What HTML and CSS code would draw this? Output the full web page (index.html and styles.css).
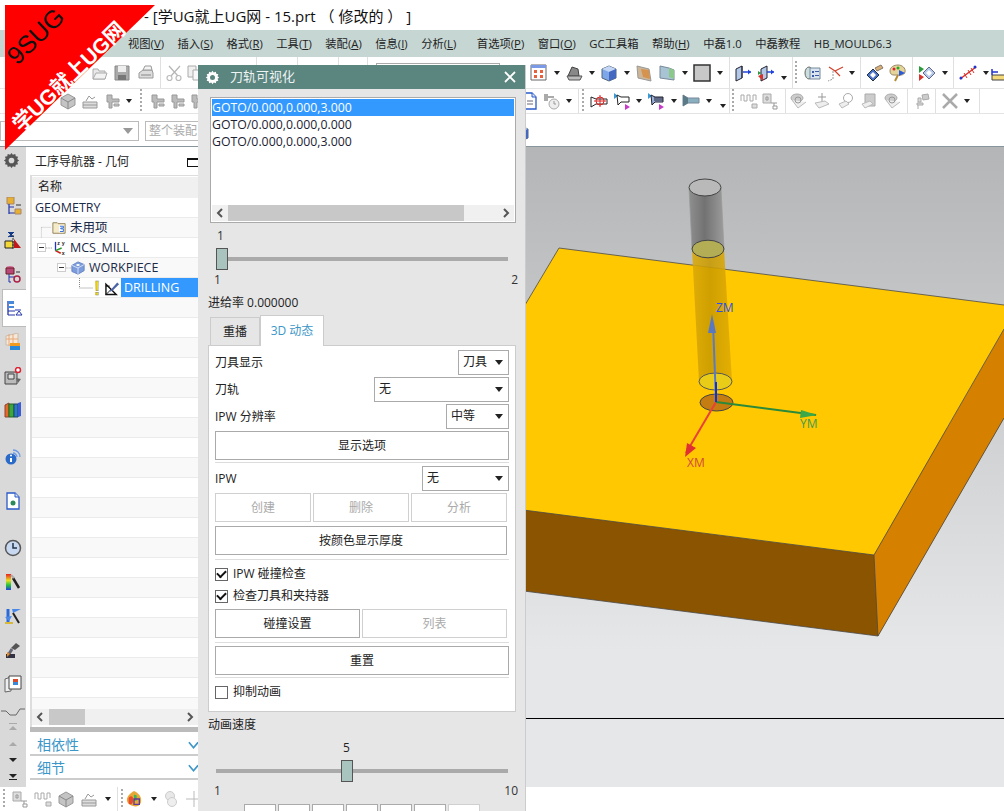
FILE: index.html
```html
<!DOCTYPE html>
<html lang="zh">
<head>
<meta charset="utf-8">
<title>刀轨可视化</title>
<link rel="stylesheet" href="styles.css">
</head>
<body>
<svg class="defs" width="0" height="0">
<defs>
<symbol id="folder" viewBox="0 0 18 18"><path d="M2 15V5h5l1 2h6v8z" fill="#e8e8e8" stroke="#aaa"/><path d="M2 15l3-6h11l-2 6z" fill="#f2f2f2" stroke="#aaa"/></symbol>
<symbol id="save" viewBox="0 0 18 18"><path d="M2 2h14v14H2z" fill="#aaa" stroke="#888"/><path d="M5 2h8v6H5z" fill="#eee"/><path d="M5 11h8v5H5z" fill="#777"/></symbol>
<symbol id="print" viewBox="0 0 18 18"><path d="M2 9l4-3h9l1 3v5H2z" fill="#ddd" stroke="#999"/><path d="M6 6l2-4h6l1 4z" fill="#f4f4f4" stroke="#999"/><path d="M4 11h10" stroke="#888"/></symbol>
<symbol id="scis" viewBox="0 0 18 18"><path d="M15 2L6 12M4 2l9 10" stroke="#b5b5b5" stroke-width="1.200" fill="none"/><circle cx="4.500" cy="14" r="2.500" fill="none" stroke="#bbb" stroke-width="1.200"/><circle cx="13.500" cy="14" r="2.500" fill="none" stroke="#bbb" stroke-width="1.200"/></symbol>
<symbol id="copy" viewBox="0 0 18 18"><path d="M2 2h8v11H2z" fill="#f0f0f0" stroke="#aaa"/><path d="M7 6h9v10H7z" fill="#f8f8f8" stroke="#aaa"/></symbol>
<symbol id="gcube" viewBox="0 0 18 18"><path d="M2 6l7-4 7 4v7l-7 4-7-4z" fill="#c4c4c4" stroke="#999"/><path d="M2 6l7 4 7-4M9 10v7" fill="none" stroke="#888"/></symbol>
<symbol id="glay" viewBox="0 0 18 18"><path d="M2 10h14v6H2z" fill="#ddd" stroke="#999"/><path d="M2 13h14M5 9l3-5 3 3 3-2" fill="none" stroke="#999"/></symbol>
<symbol id="gmac" viewBox="0 0 18 18"><path d="M3 3h5v4h7v3H8v6H5v-6H3z" fill="#bbb" stroke="#999"/><path d="M10 12h5v2h-5z" fill="#ccc" stroke="#999"/></symbol>
<symbol id="gtree" viewBox="0 0 18 18"><path d="M2 2h8v9H2z" fill="#ddd" stroke="#aaa"/><path d="M5 5h2v3H5zM13 11v5M10 11h6" fill="none" stroke="#999"/><path d="M12 14h4v3h-4z" fill="#fff" stroke="#999"/></symbol>
<symbol id="gsteps" viewBox="0 0 18 18"><path d="M1 9V3h3v6h3V3h3v6h3V3h3v5" fill="none" stroke="#aaa"/><path d="M12 12h5v4h-5z" fill="#ddd" stroke="#aaa"/></symbol>
<symbol id="gcoin" viewBox="0 0 18 18"><ellipse cx="7" cy="6" rx="6" ry="4" fill="#ccc" stroke="#aaa"/><path d="M2 8l6 8 8-6" fill="#eee" stroke="#bbb"/><circle cx="8" cy="8" r="3" fill="none" stroke="#999"/></symbol>
<symbol id="gplus" viewBox="0 0 18 18"><path d="M9 1v10M5 5h8" stroke="#999" fill="none"/><path d="M2 11l10-2 4 3-10 4z" fill="#eee" stroke="#bbb"/></symbol>
<symbol id="gring" viewBox="0 0 18 18"><circle cx="11" cy="6" r="4.500" fill="#fff" stroke="#aaa"/><path d="M2 12l7-3 3 3-7 4z" fill="#eee" stroke="#bbb"/></symbol>
<symbol id="gdoc" viewBox="0 0 18 18"><path d="M5 2h10v12H5z" fill="#ccc" stroke="#aaa"/><path d="M2 12l8-3 3 3-8 4z" fill="#eee" stroke="#bbb"/></symbol>
<symbol id="gpin" viewBox="0 0 18 18"><path d="M9 3l6-1 1 5-6 1z" fill="#ccc" stroke="#aaa"/><path d="M5 6h3v4H5zM4 11h6v2H4zM5 13v4" fill="#ddd" stroke="#aaa"/></symbol>
<symbol id="gx" viewBox="0 0 18 18"><path d="M2 2l14 14M16 2L2 16" stroke="#aaa" stroke-width="2.500" fill="none"/></symbol>
<symbol id="win" viewBox="0 0 18 18"><path d="M1 1h15v15H1z" fill="#fff" stroke="#666"/><path d="M1 1h15v3H1z" fill="#7a9ae8"/><path d="M4 6h3v3H4zM10 6h3v3h-3zM4 11h3v3H4zM10 11h3v3h-3z" fill="#e8613c"/></symbol>
<symbol id="clam" viewBox="0 0 18 18"><path d="M2 12l4-9 6 2 1 7z" fill="#888" stroke="#444"/><path d="M1 12h15l-2 4H3z" fill="#bbb" stroke="#555"/></symbol>
<symbol id="cube" viewBox="0 0 18 18"><path d="M2 5l7-3 7 3v9l-7 3-7-3z" fill="#7da7e8" stroke="#567"/><path d="M2 5l7 3 7-3-7-3z" fill="#c3d6f5"/><path d="M9 8v9l7-3V5z" fill="#4468c0"/></symbol>
<symbol id="pl1" viewBox="0 0 18 18"><path d="M2 2l12 3 2 12-13-3z" fill="#cbb798" stroke="#999"/><path d="M6 5l8 1 1 9-7-2z" fill="#d88a3c" opacity=".8"/></symbol>
<symbol id="pl2" viewBox="0 0 18 18"><path d="M2 2l9 2 5 2v10L2 14z" fill="#a8c4d4" stroke="#789"/><path d="M11 4l5 2v9l-5-2z" fill="#8cc88c"/></symbol>
<symbol id="sq" viewBox="0 0 18 18"><path d="M1 1h16v16H1z" fill="#c8c8c8" stroke="#333" stroke-width="1.500"/></symbol>
<symbol id="ex1" viewBox="0 0 18 18"><path d="M2 5l6-3v12l-6 3z" fill="#b4c8e8" stroke="#223"/><path d="M8 2v12" stroke="#223"/><path d="M9 8h8" stroke="#2244dd" stroke-width="1.500"/><path d="M17 8l-3-2.500v5z" fill="#2244dd"/></symbol>
<symbol id="ex2" viewBox="0 0 18 18"><path d="M1 7l3 2-3 2z" fill="#2a9a3a"/><path d="M4 5l6-3v12l-6 3z" fill="#b4c8e8" stroke="#223"/><path d="M1 12l5 5V10z" fill="#d8322a"/><path d="M10 8h7" stroke="#2244dd" stroke-width="1.500"/><path d="M17 8l-3-2.500v5z" fill="#2244dd"/></symbol>
<symbol id="book" viewBox="0 0 18 18"><ellipse cx="6" cy="9" rx="4" ry="6" fill="#cdd" stroke="#666"/><path d="M7 4h10v11H7z" fill="#d8e4f0" stroke="#789"/><path d="M9 7h2v2H9zM12 7h4v1h-4zM9 11h2v2H9zM12 11h4v1h-4z" fill="#3a5aa8"/></symbol>
<symbol id="axes" viewBox="0 0 18 18"><path d="M7 7v8l-5 2" fill="none" stroke="#999" stroke-dasharray="2 1"/><path d="M9 7l8-4M9 7l5 5M9 7L3 3" stroke="#d0402a" stroke-width="1.200" fill="none"/></symbol>
<symbol id="diam" viewBox="0 0 18 18"><path d="M1 11l6-6 6 6-6 6z" fill="#4a72c8" stroke="#234"/><path d="M4 11l3-3 3 3-3 3z" fill="#fff"/><path d="M9 4l6-3 2 3-6 3z" fill="#d8b078" stroke="#876"/></symbol>
<symbol id="paint" viewBox="0 0 18 18"><path d="M1 7c0-4 4-6 8-6s8 3 7 7-6 3-8 3-7 1-7-4z" fill="#e4d49a" stroke="#986"/><circle cx="5" cy="5" r="1.500" fill="#d23"/><circle cx="9" cy="4" r="1.500" fill="#2a2"/><path d="M10 6l6 3-6 3z" fill="#2a5ad8"/><path d="M6 17l3-6" stroke="#b88a30" stroke-width="2"/></symbol>
<symbol id="lay" viewBox="0 0 18 18"><path d="M1 2l5 3-5 4z" fill="#2a9a3a"/><path d="M1 10l5 3-5 4z" fill="#d8322a"/><path d="M5 9l6-6 6 6-6 6z" fill="#b4c8e8" stroke="#668"/><path d="M8 9l3-3 3 3-3 3z" fill="#fff"/></symbol>
<symbol id="meas" viewBox="0 0 18 18"><path d="M1 15L17 3" stroke="#d8322a" stroke-width="1.500"/><path d="M5 9l3 5M9 6l3 5M12 4l3 5" stroke="#d8322a"/><circle cx="2" cy="14" r="1.500" fill="#23c"/><circle cx="16" cy="3" r="1.500" fill="#23c"/></symbol>
<symbol id="rule" viewBox="0 0 18 18"><path d="M1 11h17v5H1z" fill="#f4d97a" stroke="#444"/><path d="M1 5v6M1 8h6" stroke="#23c" stroke-width="1.500"/></symbol>
<symbol id="doc" viewBox="0 0 18 18"><path d="M3 1h8l4 4v12H3z" fill="#fff" stroke="#2a5ac8" stroke-width="1.300"/><path d="M11 1v4h4" fill="#d8e4f8" stroke="#2a5ac8"/><path d="M6 9h6M6 12h6" stroke="#667"/></symbol>
<symbol id="gclock" viewBox="0 0 18 18"><path d="M1 2h4v7H1z" fill="#aaa"/><path d="M5 5h6" stroke="#aaa" stroke-width="2"/><circle cx="11" cy="12" r="5" fill="#eee" stroke="#aaa"/><path d="M11 9v3h2" fill="none" stroke="#999"/></symbol>
<symbol id="t1" viewBox="0 0 18 18"><path d="M1 5l5 2h11v5H6l-5 3z" fill="#fff" stroke="#222"/><circle cx="10" cy="9" r="4" fill="none" stroke="#d22"/><path d="M10 3v12M4 9h12" stroke="#d22"/></symbol>
<symbol id="t2" viewBox="0 0 18 18"><path d="M1 1l4 3-4 3z" fill="#3a9ad8"/><path d="M4 3l4 2h8v5H8l-3 3z" fill="#fff" stroke="#222"/><path d="M12 12l5 3-5 3z" fill="#c83ac8"/></symbol>
<symbol id="t3" viewBox="0 0 18 18"><path d="M1 1l4 3-4 3z" fill="#3a9ad8"/><path d="M4 3l4 2h8v5H8l-3 3z" fill="#9ab0d8" stroke="#223"/><path d="M7 6h9M7 8h9" stroke="#223"/><path d="M12 12l5 3-5 3z" fill="#c83ac8"/></symbol>
<symbol id="t4" viewBox="0 0 18 18"><path d="M1 3l5 3h11v5H6l-5 3z" fill="#8ab0c0" stroke="#789"/><path d="M1 3l5 3v5l-5 3z" fill="#5a7a88"/></symbol>
<symbol id="s1" viewBox="0 0 18 18"><path d="M3 0h7v7H3z" fill="#e8b030" stroke="#a86"/><path d="M5 7v10M5 10h5M5 16h6" fill="none" stroke="#23a" stroke-width="1.200"/><path d="M11 12h6v5h-6z" fill="#e8b030" stroke="#a86"/><path d="M12 8h5" stroke="#333"/></symbol>
<symbol id="s2" viewBox="0 0 18 18"><path d="M4 1l3 3 3-3M4 6l3-2 3 2" fill="#123a88" stroke="#123a88"/><path d="M1 10h8v7H1z" fill="#f4d838" stroke="#222"/><path d="M10 8l7 9h-7z" fill="#c01818"/><path d="M9 4v14" stroke="#333" stroke-dasharray="2 1"/></symbol>
<symbol id="s3" viewBox="0 0 18 18"><ellipse cx="6" cy="3" rx="4" ry="2" fill="#d86898"/><path d="M2 3h8v6H2z" fill="#b84878" stroke="#622"/><path d="M5 9v8M5 12h6M5 17h2" fill="none" stroke="#23a"/><circle cx="13" cy="14" r="3" fill="none" stroke="#a24" stroke-width="1.500"/><path d="M12 7h4" stroke="#333"/></symbol>
<symbol id="s4" viewBox="0 0 18 18"><path d="M3 2v14" stroke="#23a" stroke-width="1.300"/><path d="M3 2h6v3H3z" fill="#4a88d8"/><path d="M3 7h6v2H3z" fill="#4a88d8"/><path d="M3 12h7M3 16h7M10 11h6M11 16l3-4 3 4z" fill="none" stroke="#23a"/></symbol>
<symbol id="s5" viewBox="0 0 18 18"><path d="M2 3l12-3v12H2z" fill="#f4e8d8" stroke="#cba"/><path d="M5 1v12M9 1v12M2 6h12" stroke="#e8a878"/><path d="M6 10h10v7H6z" fill="#2a88d8"/><path d="M6 10h10v3H6z" fill="#f09a20"/></symbol>
<symbol id="s6" viewBox="0 0 18 18"><path d="M1 5h12v12H1z" fill="#bbb" stroke="#444"/><path d="M4 7h6v5H4z" fill="#ddd" stroke="#444"/><path d="M12 11l5 1-3 4z" fill="#666"/><circle cx="14" cy="3" r="2.500" fill="#fff" stroke="#d23" stroke-width="1.500"/></symbol>
<symbol id="s7" viewBox="0 0 18 18"><path d="M1 4l4-2v14H1z" fill="#e8682a" stroke="#843"/><path d="M5 3h5v13H5z" fill="#3aa83a" stroke="#262"/><path d="M10 3h4v13h-4z" fill="#2a78c8" stroke="#246"/><path d="M14 2l3-1v14l-3 1z" fill="#3a5ad8"/></symbol>
<symbol id="s8" viewBox="0 0 18 18"><circle cx="7" cy="12" r="5.500" fill="#2a6ac8"/><path d="M7 11v4" stroke="#fff" stroke-width="2"/><circle cx="7" cy="8.500" r="1" fill="#fff"/><path d="M9 3c4 0 7 3 7 7M9 6c2 0 4 2 4 4" fill="none" stroke="#6a9ae8" stroke-width="1.300"/></symbol>
<symbol id="s9" viewBox="0 0 18 18"><path d="M3 1h8l4 4v12H3z" fill="#fff" stroke="#2a5ac8" stroke-width="1.300"/><path d="M11 1v4h4" fill="#d8e4f8" stroke="#2a5ac8"/><circle cx="9" cy="11" r="2.500" fill="#2a8a5a"/></symbol>
<symbol id="s10" viewBox="0 0 18 18"><circle cx="9" cy="9" r="7.500" fill="#c8d8f0" stroke="#555" stroke-width="1.500"/><path d="M9 4v5h4" fill="none" stroke="#234" stroke-width="1.500"/></symbol>
<symbol id="s11" viewBox="0 0 18 18"><defs><linearGradient id="rb" x1="0" y1="0" x2="0" y2="1"><stop offset="0" stop-color="#e82020"/><stop offset=".4" stop-color="#e8e020"/><stop offset=".7" stop-color="#20c040"/><stop offset="1" stop-color="#2040e0"/></linearGradient></defs><path d="M2 1h5v16H2z" fill="url(#rb)"/><path d="M9 5l6 10" stroke="#222" stroke-width="2.500"/><path d="M7 2l3 3" stroke="#aaa" stroke-width="2"/></symbol>
<symbol id="s12" viewBox="0 0 18 18"><path d="M4 2v14" stroke="#2a6ad8" stroke-width="3"/><path d="M1 10l7-1-3 5zM8 2h9L9 6" fill="#4a88e8"/><path d="M9 6l6 10" stroke="#222" stroke-width="2"/><path d="M1 16h8" stroke="#d8b838" stroke-width="2"/></symbol>
<symbol id="s13" viewBox="0 0 18 18"><path d="M7 7l5-5 4 3-5 4z" fill="#555"/><path d="M8 8l-3 5" stroke="#667" stroke-width="3"/><path d="M2 13h9v4H2z" fill="#334"/><path d="M3 11l3 2-3 3z" fill="#e88a20"/></symbol>
<symbol id="s14" viewBox="0 0 18 18"><path d="M1 4l6-2v14l-6 1z" fill="#eee" stroke="#666"/><path d="M5 1h12v13H5z" fill="#fff" stroke="#444"/><path d="M9 4h5v3H9z" fill="#d84a2a"/><path d="M9 7h5v3H9z" fill="#3a88d8"/></symbol>
<symbol id="flame" viewBox="0 0 18 18"><path d="M9 0c5 2 9 7 8 12s-6 6-9 5-7-3-7-7 4-8 8-10z" fill="#e8a838"/><path d="M3 8c2-3 5-3 5 2s-3 6-5 4z" fill="#e84a2a"/><path d="M9 4l3 1v6H9z" fill="#38b858"/><path d="M9 9h6v6H9z" fill="none" stroke="#623a98" stroke-width="1.500"/></symbol>
<symbol id="gears" viewBox="0 0 18 18"><circle cx="8" cy="6" r="4.500" fill="#e8e8e8" stroke="#ccc"/><circle cx="10" cy="12" r="4.500" fill="#eee" stroke="#ccc"/></symbol>
<symbol id="cross" viewBox="0 0 18 18"><path d="M9 1v16M1 9h16" stroke="#bbb"/></symbol>
<symbol id="cog" viewBox="0 0 18 18"><path d="M9 1l1.500 2 2.500-1 .5 2.500 2.500.5-1 2.500 2 1.500-2 1.500 1 2.500-2.500.5-.5 2.500-2.500-1L9 17l-1.500-2-2.500 1-.5-2.500-2.500-.5 1-2.500-2-1.500 2-1.500-1-2.500 2.500-.5.500-2.500 2.500 1z" fill="currentColor"/><circle cx="9" cy="9" r="3" fill="var(--hole)"/></symbol>
<symbol id="chl" viewBox="0 0 10 10"><path d="M7 1L3 5l4 4" fill="none" stroke="#555" stroke-width="2"/></symbol>
<symbol id="chr" viewBox="0 0 10 10"><path d="M3 1l4 4-4 4" fill="none" stroke="#555" stroke-width="2"/></symbol>
<symbol id="chd" viewBox="0 0 12 10"><path d="M1 2l5 6 5-6" fill="none" stroke="#3c96c8" stroke-width="1.800"/></symbol>
<symbol id="mcs" viewBox="0 0 16 16"><path d="M4 1v10" stroke="#2233cc" stroke-width="1.500"/><path d="M4 11l6 3" stroke="#d02020" stroke-width="1.800"/><path d="M4 11l7-3" stroke="#2a9a2a" stroke-width="1.800"/><text class="mcs-t" x="6" y="5">z</text><text class="mcs-t" x="11" y="5">y</text><text class="mcs-t" x="11" y="16">x</text></symbol>
<symbol id="wp" viewBox="0 0 16 16"><path d="M1 5l7-4 7 3v7l-7 4-7-3z" fill="#7d9cdc" stroke="#6080c0"/><path d="M1 5l7 3 7-4M8 8v7" fill="none" stroke="#dde6f8"/><ellipse cx="8" cy="4.500" rx="2" ry="1.200" fill="#fff"/></symbol>
<symbol id="fold" viewBox="0 0 16 16"><path d="M1 14V2h5l1 1h8v11z" fill="#f6ebc8" stroke="#8a7a50"/><path d="M8 5h5v8H8z" fill="#fff"/><path d="M9 6h4v2h-3v1h3v3H9" fill="none" stroke="#2060d8"/></symbol>
<symbol id="drill" viewBox="0 0 16 16"><path d="M1 4v11h11z" fill="#fff" stroke="#111" stroke-width="1.500"/><path d="M1 6h4M1 15l6-6" stroke="#111"/><path d="M6 10l7-8 2 2-7 7-3 1z" fill="#4a64a8"/></symbol>
</defs>
</svg>

<div class="app">
  <header class="titlebar">- [学UG就上UG网 - 15.prt （ 修改的 ） ]</header>

  <nav class="menubar">
    <span>视图(<u>V</u>)</span><span>插入(<u>S</u>)</span><span>格式(<u>R</u>)</span><span>工具(<u>T</u>)</span><span>装配(<u>A</u>)</span><span>信息(<u>I</u>)</span><span>分析(<u>L</u>)</span>
    <span class="menu-far">首选项(<u>P</u>)</span><span>窗口(<u>O</u>)</span><span>GC工具箱</span><span>帮助(<u>H</u>)</span><span>中磊1.0</span><span>中磊教程</span><span>HB_MOULD6.3</span>
  </nav>

  <div class="toolrow toolrow-1">
    <div class="tgrid tgrid-1l">
      <b></b>
      <svg class="ic"><use href="#folder"/></svg>
      <svg class="ic"><use href="#save"/></svg>
      <svg class="ic"><use href="#print"/></svg>
      <i class="sep"></i>
      <svg class="ic"><use href="#scis"/></svg>
      <svg class="ic"><use href="#copy"/></svg>
      <i class="sep sep-e"></i><i class="sep sep-e"></i><i class="sep sep-e"></i><i class="sep sep-e"></i>
      <div class="combo-top"></div>
    </div>
    <div class="tgrid tgrid-1r">
      <svg class="ic"><use href="#win"/></svg><i class="dd"></i>
      <svg class="ic"><use href="#clam"/></svg><i class="dd"></i>
      <svg class="ic"><use href="#cube"/></svg><i class="dd"></i>
      <svg class="ic"><use href="#pl1"/></svg>
      <svg class="ic"><use href="#pl2"/></svg><i class="dd"></i>
      <svg class="ic"><use href="#sq"/></svg><i class="dd"></i>
      <i class="sep"></i>
      <svg class="ic"><use href="#ex1"/></svg>
      <svg class="ic"><use href="#ex2"/></svg><i class="dd dd-low"></i>
      <i class="sep"></i><i class="grip"></i>
      <svg class="ic"><use href="#book"/></svg>
      <svg class="ic"><use href="#axes"/></svg><i class="dd"></i>
      <i class="sep"></i>
      <svg class="ic"><use href="#diam"/></svg>
      <svg class="ic"><use href="#paint"/></svg>
      <i class="sep"></i>
      <svg class="ic"><use href="#lay"/></svg><i class="dd"></i>
      <i class="sep"></i>
      <svg class="ic"><use href="#meas"/></svg><i class="dd"></i>
      <svg class="ic"><use href="#rule"/></svg>
    </div>
  </div>

  <div class="toolrow toolrow-2">
    <div class="tgrid tgrid-2l">
      <b></b>
      <svg class="ic"><use href="#gcube"/></svg>
      <svg class="ic"><use href="#glay"/></svg>
      <svg class="ic"><use href="#gmac"/></svg><i class="dd"></i>
      <i class="grip"></i>
      <svg class="ic"><use href="#gmac"/></svg>
      <svg class="ic"><use href="#gmac"/></svg>
      <svg class="ic"><use href="#gmac"/></svg>
    </div>
    <div class="tgrid tgrid-2r">
      <svg class="ic"><use href="#doc"/></svg>
      <svg class="ic"><use href="#gclock"/></svg><i class="dd"></i>
      <i class="sep"></i><i class="grip"></i>
      <svg class="ic"><use href="#t1"/></svg>
      <svg class="ic"><use href="#t2"/></svg><i class="dd"></i>
      <svg class="ic"><use href="#t3"/></svg><i class="dd"></i>
      <svg class="ic"><use href="#t4"/></svg><i class="dd"></i><i class="dd dd-low"></i>
      <i class="sep"></i><i class="grip"></i>
      <svg class="ic"><use href="#gsteps"/></svg>
      <svg class="ic"><use href="#gtree"/></svg>
      <i class="sep"></i>
      <svg class="ic"><use href="#gcoin"/></svg>
      <svg class="ic"><use href="#gplus"/></svg>
      <svg class="ic"><use href="#gring"/></svg>
      <svg class="ic"><use href="#gdoc"/></svg>
      <svg class="ic"><use href="#gcoin"/></svg>
      <i class="sep"></i>
      <svg class="ic"><use href="#gpin"/></svg>
      <i class="sep"></i>
      <svg class="ic"><use href="#gx"/></svg><i class="dd"></i>
      <i class="sep"></i>
    </div>
  </div>

  <div class="toolrow toolrow-3">
    <div class="combo combo-a"><i class="dd dd-gray"></i></div>
    <div class="combo combo-b">整个装配</div>
    <svg class="ic ic-row3"><use href="#cube"/></svg>
  </div>

  <main class="main">
    <aside class="strip">
      <div class="sbtn sbtn-gear"><svg class="ic ic-cog"><use href="#cog"/></svg></div>
      <div class="sbtn gap-16"><svg class="ic"><use href="#s1"/></svg></div>
      <div class="sbtn"><svg class="ic"><use href="#s2"/></svg></div>
      <div class="sbtn"><svg class="ic"><use href="#s3"/></svg></div>
      <div class="sbtn sbtn-active"><svg class="ic"><use href="#s4"/></svg></div>
      <div class="sbtn"><svg class="ic"><use href="#s5"/></svg></div>
      <div class="sbtn"><svg class="ic"><use href="#s6"/></svg></div>
      <div class="sbtn"><svg class="ic"><use href="#s7"/></svg></div>
      <div class="sbtn gap-12"><svg class="ic"><use href="#s8"/></svg></div>
      <div class="sbtn gap-11"><svg class="ic"><use href="#s9"/></svg></div>
      <div class="sbtn gap-13"><svg class="ic"><use href="#s10"/></svg></div>
      <div class="sbtn"><svg class="ic"><use href="#s11"/></svg></div>
      <div class="sbtn"><svg class="ic"><use href="#s12"/></svg></div>
      <div class="sbtn"><svg class="ic"><use href="#s13"/></svg></div>
      <div class="sbtn"><svg class="ic"><use href="#s14"/></svg></div>
      <div class="smini gap-3"><svg class="curve" viewBox="0 0 24 10"><path d="M0 4h5l4 4h6l4-6h5" fill="none" stroke="#666"/></svg></div>
      <div class="smini"><i class="tri tri-up tri-bar"></i></div>
      <div class="smini"><i class="tri tri-up"></i></div>
      <div class="smini"><i class="tri tri-down"></i></div>
      <div class="smini"><i class="tri tri-down tri-dark tri-bar-b"></i></div>
    </aside>

    <section class="nav">
      <div class="nav-head"><span>工序导航器 - 几何</span><i class="nav-max"></i></div>
      <div class="tree">
        <div class="tree-head">名称</div>
        <div class="tree-rows">
          <div class="trow"><span class="tlabel tl-geo">GEOMETRY</span></div>
          <div class="trow">
            <svg class="guide guide-1" viewBox="0 0 20 30"><path d="M.5 10h17M.5 10v20" stroke="#888" stroke-dasharray="1 1" fill="none"/></svg>
            <svg class="tic"><use href="#fold"/></svg><span class="tlabel">未用项</span>
          </div>
          <div class="trow">
            <i class="exp exp-1"></i><svg class="guide guide-dash" viewBox="0 0 7 2"><path d="M0 1h7" stroke="#888" stroke-dasharray="1 1"/></svg>
            <svg class="tic"><use href="#mcs"/></svg><span class="tlabel">MCS_MILL</span>
          </div>
          <div class="trow">
            <i class="exp exp-2"></i><svg class="guide guide-dash guide-dash-s" viewBox="0 0 7 2"><path d="M0 1h7" stroke="#888" stroke-dasharray="1 1"/></svg>
            <svg class="tic"><use href="#wp"/></svg><span class="tlabel">WORKPIECE</span>
          </div>
          <div class="trow trow-sel">
            <svg class="guide guide-4" viewBox="0 0 14 20"><path d="M.5 0v10h13" stroke="#888" stroke-dasharray="1 1" fill="none"/></svg>
            <span class="warn">!</span>
            <svg class="tic tic-d"><use href="#drill"/></svg>
            <span class="tlabel tl-sel">DRILLING</span>
          </div>
          <div class="trow"></div><div class="trow"></div><div class="trow"></div><div class="trow"></div><div class="trow"></div>
          <div class="trow"></div><div class="trow"></div><div class="trow"></div><div class="trow"></div><div class="trow"></div>
          <div class="trow"></div><div class="trow"></div><div class="trow"></div><div class="trow"></div><div class="trow"></div>
          <div class="trow"></div><div class="trow"></div><div class="trow"></div><div class="trow"></div><div class="trow"></div>
          <div class="trow"></div>
        </div>
        <div class="hscroll hscroll-nav">
          <svg class="arrow"><use href="#chl"/></svg><i class="thumb-nav"></i><svg class="arrow arrow-r"><use href="#chr"/></svg>
        </div>
      </div>
      <div class="sect sect-first"><span>相依性</span><svg class="chev"><use href="#chd"/></svg></div>
      <div class="sect"><span>细节</span><svg class="chev"><use href="#chd"/></svg></div>
    </section>

    <section class="viewport">
      <svg class="scene" viewBox="198 146 806 640">
        <defs>
          <linearGradient id="bgv" x1="0" y1="146" x2="0" y2="650" gradientUnits="userSpaceOnUse"><stop offset="0" stop-color="#b3b5b7"/><stop offset="1" stop-color="#e6e7e9"/></linearGradient>
          <linearGradient id="cylg" x1="0" y1="0" x2="1" y2="0"><stop offset="0" stop-color="#8f8f8f"/><stop offset=".45" stop-color="#727272"/><stop offset="1" stop-color="#9c9c9c"/></linearGradient>
          <linearGradient id="cyly" x1="0" y1="0" x2="1" y2="0"><stop offset="0" stop-color="#dba908"/><stop offset=".45" stop-color="#c89a00"/><stop offset="1" stop-color="#e0ac04"/></linearGradient>
        </defs>
        <rect x="198" y="146" width="806" height="640" fill="url(#bgv)"/>
        <path d="M1004 417L878 635 500 587V506z" fill="#8b5400"/>
        <path d="M874 554l4 81 126-218v-89z" fill="#d68000"/>
        <path d="M559 247l445 57v24L874 554 500 506V346z" fill="#ffc800"/>
        <path d="M500 346L559 247l445 57M1004 328L874 554 500 506M874 554l4 81 126-218M878 635L500 587" fill="none" stroke="#4a4a4a" stroke-width=".8"/>
        <line x1="198" y1="717.500" x2="1004" y2="717.500" stroke="#000"/>

        <path d="M689 187l3 61h32l-3-61z" fill="url(#cylg)"/>
        <path d="M692 248l7 132.500h33L724 248z" fill="url(#cyly)" opacity=".88"/>
        <path d="M689 187l3 61M721 187l3 61" stroke="#999" stroke-width=".7" fill="none"/>
        <ellipse cx="705" cy="186.500" rx="16" ry="8.500" fill="#b9b9b9" stroke="#444"/>
        <ellipse cx="708" cy="248" rx="16" ry="8.800" fill="#b3ae56" stroke="#444"/>
        <ellipse cx="715.500" cy="380.500" rx="16.500" ry="8.500" fill="#e8cc18" stroke="#555"/>
        <ellipse cx="716.500" cy="401.500" rx="16.500" ry="8.500" fill="#c57c10" stroke="#444"/>
        <path d="M716 401L686 452" stroke="#e8403a" stroke-width="2"/>
        <path d="M685 456l2-14 9 5z" fill="#e03030"/>
        <path d="M716 401l100 13" stroke="#2a8a3a" stroke-width="2"/>
        <path d="M817 414l-16-5-1 8z" fill="#3aa848"/>
        <path d="M713 322l3 79" stroke="#5a7ac8" stroke-width="2"/>
        <path d="M716 401v-20" stroke="#1030d8" stroke-width="2"/>
        <path d="M712 313l-4 19h8z" fill="#5a78c0"/>
        <text class="axl axl-z" x="716" y="311">ZM</text>
        <text class="axl axl-y" x="800" y="427">YM</text>
        <text class="axl axl-x" x="687" y="466">XM</text>
      </svg>
    </section>
  </main>

  <footer class="bottombar">
    <i class="grip grip-b"></i>
    <svg class="ic ic-b1"><use href="#gtree"/></svg>
    <svg class="ic ic-b1"><use href="#gsteps"/></svg>
    <svg class="ic ic-b1"><use href="#gcube"/></svg>
    <svg class="ic ic-b1"><use href="#glay"/></svg>
    <i class="dd"></i>
    <i class="sep sep-b"></i>
    <i class="grip grip-b"></i>
    <svg class="ic ic-b2"><use href="#flame"/></svg>
    <i class="dd dd-b2"></i>
    <svg class="ic ic-b3"><use href="#gears"/></svg>
    <svg class="ic ic-b3"><use href="#cross"/></svg>
  </footer>

  <section class="dialog">
    <div class="dlg-title">
      <svg class="ic ic-dlg"><use href="#cog"/></svg>
      <span class="dlg-name">刀轨可视化</span>
      <svg class="dlg-x" viewBox="0 0 12 12"><path d="M1 1l10 10M11 1L1 11" stroke="#fff" stroke-width="1.800"/></svg>
    </div>
    <div class="listbox">
      <div class="list-items">
        <div class="li li-sel">GOTO/0.000,0.000,3.000</div>
        <div class="li">GOTO/0.000,0.000,0.000</div>
        <div class="li">GOTO/0.000,0.000,3.000</div>
      </div>
      <div class="hscroll">
        <svg class="arrow"><use href="#chl"/></svg><i class="thumb-list"></i><svg class="arrow arrow-r"><use href="#chr"/></svg>
      </div>
    </div>
    <div class="val val-a">1</div>
    <div class="slider"><i class="sthumb"></i></div>
    <div class="ends"><span>1</span><span>2</span></div>
    <div class="feed">进给率 0.000000</div>
    <div class="tabs"><div class="tab">重播</div><div class="tab tab-on">3D 动态</div></div>
    <div class="panel">
      <div class="frow"><span>刀具显示</span><div class="sel sel-51">刀具<i class="dd"></i></div></div>
      <div class="frow"><span>刀轨</span><div class="sel sel-135">无<i class="dd"></i></div></div>
      <div class="frow"><span>IPW 分辨率</span><div class="sel sel-63">中等<i class="dd"></i></div></div>
      <div class="btn btn-full">显示选项</div>
      <hr class="line line-a">
      <div class="frow"><span>IPW</span><div class="sel sel-87">无<i class="dd"></i></div></div>
      <div class="btnrow">
        <div class="btn btn-off btn-3">创建</div><div class="btn btn-off btn-3">删除</div><div class="btn btn-off btn-3">分析</div>
      </div>
      <div class="btn btn-292 mt-4">按颜色显示厚度</div>
      <hr class="line line-b">
      <label class="check check-first"><i class="cb cb-on"></i>IPW 碰撞检查</label>
      <label class="check"><i class="cb cb-on"></i>检查刀具和夹持器</label>
      <div class="btnrow mt-3">
        <div class="btn btn-145">碰撞设置</div><div class="btn btn-off btn-145">列表</div>
      </div>
      <hr class="line line-c">
      <div class="btn btn-full">重置</div>
      <hr class="line line-d">
      <label class="check check-last"><i class="cb"></i>抑制动画</label>
    </div>
    <div class="speed-label">动画速度</div>
    <div class="val val-b">5</div>
    <div class="slider slider-b"><i class="sthumb sthumb-b"></i></div>
    <div class="ends ends-b"><span>1</span><span>10</span></div>
    <div class="playrow">
      <i class="pbtn"></i><i class="pbtn"></i><i class="pbtn"></i><i class="pbtn"></i><i class="pbtn"></i><i class="pbtn"></i><i class="pbtn pbtn-off"></i>
    </div>
  </section>

  <svg class="ribbon" viewBox="0 0 160 155">
    <path d="M5 5H155L5 150z" fill="#f00"/>
    <text class="rb-black" transform="translate(17 66) rotate(-44)">9SUG</text>
    <text class="rb-white" transform="translate(21 133) rotate(-44)">学UG就上UG网</text>
  </svg>
</div>
</body>
</html>
```

FILE: styles.css
```css
* { box-sizing: border-box; }
html, body { margin: 0; padding: 0; }
body {
  width: 1004px; height: 811px; overflow: hidden; background: #fff; color: #222;
  font: 12px/1.2 "Open Sans", "Noto Sans CJK SC", sans-serif;
}
i, b { display: block; font-style: normal; }
hr { border: 0; margin: 0; }
.defs { position: absolute; }
.app { position: relative; width: 1004px; height: 811px; display: flex; flex-direction: column; overflow: hidden; }

/* title + menu */
.titlebar { height: 30px; padding: 4px 0 0 144px; font-size: 15px; line-height: 24px; color: #111; white-space: pre; }
.menubar { height: 27px; padding-left: 128px; background: #c6d6d3; display: flex; align-items: center; gap: 13.500px; font-size: 11.300px; white-space: nowrap; color: #222; }
.menu-far { margin-left: 7px; }

/* toolbars */
.toolrow { display: flex; background: #fff; overflow: hidden; flex: none; }
.toolrow-1 { height: 32px; border-bottom: 1px solid #e4e4e4; }
.toolrow-2 { height: 25px; border-bottom: 1px solid #e4e4e4; }
.toolrow-3 { height: 33px; border-bottom: 1px solid #87969a; align-items: flex-start; padding-top: 7px; }
.tgrid { display: grid; align-items: center; justify-items: center; height: 100%; flex: none; grid-template-rows: 100%; }
.tgrid-1l { width: 526px; grid-template-columns: 88px 24px 20px 28px 1px 26px 16px 54px 41px 41px 29px auto; justify-content: start; }
.tgrid-1r { grid-template-columns: 26px 10px 26px 8px 26px 10px 24px 22px 14px 20px 16px 2px 26px 20px 16px 1px 6px 26px 20px 14px 2px 28px 18px 10px 20px 16px 1px 28px 8px 20px; }
.tgrid-2l { width: 516px; grid-template-columns: 58px 20px 24px 22px 10px 14px 20px 20px 20px; justify-content: start; }
.tgrid-2r { grid-template-columns: 28px 16px 18px 1px 7px 25px 21px 13px 21px 15px 19px 17px 11px 2px 6px 26px 16px 14px 14px 32px 16px 30px 18px 10px 20px 6px 24px 10px 14px; }
.ic { width: 18px; height: 18px; display: block; overflow: visible; flex: none; }
.sep { width: 1px; height: 100%; background: #e0e0e0; }
.sep-e { justify-self: end; }
.dd { width: 0; height: 0; border: 3.500px solid transparent; border-top: 4px solid #222; border-bottom: 0; }
.dd-low { margin-top: 10px; }
.dd-gray { border-top-color: #999; border-left-width: 5px; border-right-width: 5px; border-top-width: 6px; }
.grip { width: 2px; height: 24px; background: repeating-linear-gradient(#aaa 0 2px, transparent 2px 4px); }
.combo-top { width: 124px; height: 20px; margin: 6px 0 0 8px; border: 1px solid #aaa; align-self: start; justify-self: start; }
.combo { height: 20px; border: 1px solid #bbb; background: #fff; display: flex; align-items: center; color: #aaa; }
.combo-a { width: 139px; margin-right: 6px; justify-content: flex-end; padding-right: 5px; flex: none; }
.combo-b { width: 90px; padding-left: 3px; flex: none; }
.ic-row3 { margin: 3px 0 0 277px; }

/* main */
.main { height: 640px; display: flex; flex: none; }
.strip { width: 26px; background: #d9d9d9; display: flex; flex-direction: column; align-items: center; flex: none; }
.sbtn { width: 26px; height: 34px; flex: none; display: flex; align-items: center; justify-content: center; }
.sbtn-gear { height: 27px; }
.ic-cog { color: #555; --hole: #d9d9d9; width: 17px; height: 17px; margin-right: 4px; }
.sbtn-active { height: 38px; margin: -2px 0 -2px 2px; background: #fff; border: 1px solid #bbb; border-right: 0; width: 24px; padding-right: 2px; }
.gap-16 { margin-top: 15px; }
.gap-12 { margin-top: 12px; }
.gap-11 { margin-top: 11px; }
.gap-13 { margin-top: 13px; }
.gap-3 { margin-top: 3px; }
.smini { width: 26px; height: 16px; flex: none; display: flex; flex-direction: column; align-items: center; justify-content: center; }
.curve { width: 24px; height: 10px; }
.tri { width: 0; height: 0; border: 4px solid transparent; }
.tri-up { border-top: 0; border-bottom: 4px solid #aaa; }
.tri-down { border-bottom: 0; border-top: 4px solid #222; }
.tri-bar::before, .tri-bar-b::after { content: ""; display: block; width: 8px; height: 1px; margin-left: -4px; }
.tri-bar::before { background: #aaa; margin-top: -3px; }
.tri-bar-b::after { background: #222; margin-top: 1px; }

/* navigator */
.nav { width: 172px; flex: none; background: #fff; display: flex; flex-direction: column; overflow: hidden; }
.nav-head { height: 28px; padding: 8px 0 0 9px; display: flex; justify-content: space-between; flex: none; white-space: nowrap; }
.nav-max { width: 11px; height: 9px; margin: 3px 0 0; border: 1px solid #111; border-top-width: 2px; border-right: 0; }
.tree { height: 552px; margin-left: 4px; border: 1px solid #ddd; border-right: 0; border-left-width: 2px; border-bottom: 0; padding-top: 1px; display: flex; flex-direction: column; flex: none; overflow: hidden; }
.tree-head { height: 21px; padding: 3px 0 0 6px; background: #f0f0f0; flex: none; }
.tree-rows { height: 511px; flex: none; overflow: hidden; }
.trow { height: 20px; display: flex; align-items: center; border-bottom: 1px solid #ebebeb; white-space: nowrap; }
.trow:nth-child(even) { background: #f9f9f9; }
.tlabel { margin: 0 0 0 4px; color: #1b2b4a; font-size: 12.500px; }
.tl-geo { margin-left: 3px; }
.tic { width: 14px; height: 14px; flex: none; overflow: visible; }
.mcs-t { font: bold 6px "Liberation Sans", sans-serif; fill: #222; }
.guide { flex: none; overflow: visible; }
.guide-1 { width: 11px; height: 16px; margin: 4px 0 0 9px; }
.guide-dash { width: 6px; height: 2px; }
.guide-dash-s { width: 5px; }
.guide-4 { width: 14px; height: 20px; margin-left: 47px; }
.exp { width: 9px; height: 9px; flex: none; border: 1px solid #ccc; background: linear-gradient(#333,#333) center/5px 1px no-repeat #fff; }
.exp-1 { margin-left: 5px; }
.exp-2 { margin-left: 25px; }
.warn { width: 8px; text-align: center; color: #f4d820; font: bold 20px/18px "Liberation Sans", sans-serif; -webkit-text-stroke: .4px #886; flex: none; }
.tic-d { width: 15px; height: 16px; margin-left: 4px; }
.tl-sel { margin: 0 0 0 1px; flex: 1; height: 19px; line-height: 20px; background: #3399ff; color: #fff; padding-left: 3px; }
.hscroll { height: 16px; background: #f0f0f0; display: flex; align-items: center; flex: none; }
.arrow { width: 10px; height: 10px; margin: 0 3px; flex: none; overflow: visible; }
.arrow-r { margin-left: auto; }
.thumb-nav { width: 36px; height: 16px; background: #c8c8c8; margin-left: 1px; }
.sect { height: 24px; margin-left: 4px; border-bottom: 2px solid #ccc; display: flex; align-items: center; justify-content: space-between; padding: 2px 0 0 7px; color: #3c96c8; font-size: 14px; flex: none; }
.sect-first { height: 29px; border-top: 5px solid #bbb; padding-top: 4px; }
.chev { width: 11px; height: 10px; flex: none; margin-right: -1px; }

/* viewport */
.viewport { flex: 1; min-width: 0; }
.scene { display: block; width: 806px; height: 640px; }
.axl { font: 12px "Open Sans", sans-serif; }
.axl-z { fill: #2b50e8; }
.axl-y { fill: #3f9a52; }
.axl-x { fill: #d24a3e; }

/* bottom */
.bottombar { height: 24px; display: flex; align-items: center; padding-left: 3px; background: #fff; flex: none; }
.grip-b { height: 20px; }
.ic-b1 { margin-left: 5px; width: 18px; }
.ic-b1:first-of-type { margin-left: 6px; }
.ic-b2 { margin-left: 3px; width: 16px; height: 16px; }
.ic-b3 { margin-left: 5px; }
.bottombar .dd { margin-left: 7px; }
.bottombar .dd-b2 { margin-left: 9px; }
.sep-b { margin: 0 3px 0 6px; height: 24px; }

/* dialog */
.dialog { position: absolute; left: 198px; top: 65px; width: 328px; height: 746px; background: #e6e6e6; border-right: 1px solid #ccc; overflow: hidden; }
.dlg-title { height: 24px; background: #5b857f; display: flex; align-items: center; padding-left: 7px; color: #eef4f3; }
.ic-dlg { width: 15px; height: 15px; color: #fff; --hole: #5b857f; }
.dlg-name { margin-left: 10px; font-size: 13px; }
.dlg-x { width: 12px; height: 12px; margin-left: auto; margin-right: 9px; flex: none; }
.listbox { width: 306px; height: 126px; margin: 8px 0 0 12px; border: 1px solid #aaa; background: #fff; padding: 1px; display: flex; flex-direction: column; }
.list-items { flex: 1; }
.li { height: 17px; line-height: 17px; font-size: 12.300px; white-space: nowrap; color: #1b2233; }
.li-sel { background: #3399ff; color: #fff; }
.thumb-list { width: 236px; height: 16px; background: #c8c8c8; margin-left: 0; }
.val { height: 16px; line-height: 16px; }
.val-a { margin: 5px 0 0 19px; color: #333; }
.slider { width: 292px; height: 22px; margin: 4px 0 0 18px; display: flex; align-items: center; background: linear-gradient(#aaa, #aaa) center / 100% 4px no-repeat; }
.sthumb { width: 12px; height: 22px; background: #a9c3bf; border: 1px solid #555; }
.sthumb-b { margin-left: 125px; }
.ends { width: 304px; height: 16px; line-height: 16px; margin: 2px 0 0 16px; display: flex; justify-content: space-between; color: #333; }
.feed { height: 16px; line-height: 16px; margin: 7px 0 0 10px; }
.tabs { height: 31px; margin: 4px 0 0 12px; display: flex; align-items: flex-end; position: relative; z-index: 1; }
.tab { width: 50px; height: 29px; line-height: 28px; text-align: center; border: 1px solid #ccc; border-bottom: 0; }
.tab-on { width: 64px; height: 31px; background: #fff; color: #3c96c8; line-height: 29px; }
.panel { width: 308px; height: 367px; margin: -1px 0 0 10px; background: #fff; border: 1px solid #ccc; padding: 4px 6px 0; }
.frow { width: 294px; height: 25px; margin-bottom: 2px; display: flex; align-items: center; justify-content: space-between; }
.frow > span { margin-top: 2px; }
.sel { height: 25px; border: 1px solid #aaa; padding: 0 5px 0 4px; display: flex; align-items: center; justify-content: space-between; background: #fff; }
.sel .dd { border-left-width: 4px; border-right-width: 4px; border-top-width: 5px; }
.sel-51 { width: 51px; }
.sel-135 { width: 135px; }
.sel-63 { width: 63px; }
.sel-87 { width: 87px; }
.btn { height: 29px; line-height: 27px; text-align: center; border: 1px solid #aaa; background: #fff; }
.btn-full { width: 294px; }
.btn-292 { width: 292px; }
.btn-3 { width: 96px; }
.btn-145 { width: 145px; }
.btn-off { border-color: #d0d0d0; color: #aaa; }
.btnrow { display: flex; gap: 2px; }
.mt-4 { margin-top: 4px; }
.mt-3 { margin-top: 3px; }
.line { width: 294px; height: 1px; background: #ddd; }
.line-a { margin: 2px 0 3px; }
.line-b { margin: 4px 0 4px; }
.line-c { margin: 4px 0 3px; }
.line-d { margin: 2px 0 4px; }
.check { height: 20px; display: flex; align-items: center; gap: 5px; margin-top: 2px; }
.check-first { margin-top: 0; }
.check-last { margin-top: 0; }
.cb { width: 13px; height: 13px; border: 1px solid #666; background: #fff; flex: none; display: flex; align-items: center; justify-content: center; }
.cb-on::after { content: ""; width: 7px; height: 4px; margin-top: -2px; border-left: 2px solid #111; border-bottom: 2px solid #111; transform: rotate(-45deg); }
.speed-label { height: 16px; line-height: 16px; margin: 5px 0 0 10px; }
.val-b { margin: 7px 0 0 145px; }
.slider-b { margin-top: 4px; }
.ends-b { margin-top: 1px; }
.playrow { display: flex; gap: 2px; margin: 5px 0 0 46px; }
.pbtn { width: 32px; height: 20px; border: 1px solid #aaa; background: #fff; }
.pbtn-off { border-color: #d0d0d0; }

/* corner ribbon */
.ribbon { position: absolute; left: 0; top: 0; width: 160px; height: 155px; }
.rb-black { font: 25px "Liberation Sans", sans-serif; fill: #111; }
.rb-white { font: bold 21px "Liberation Sans", "Noto Sans CJK SC", sans-serif; fill: #fff; }
```
